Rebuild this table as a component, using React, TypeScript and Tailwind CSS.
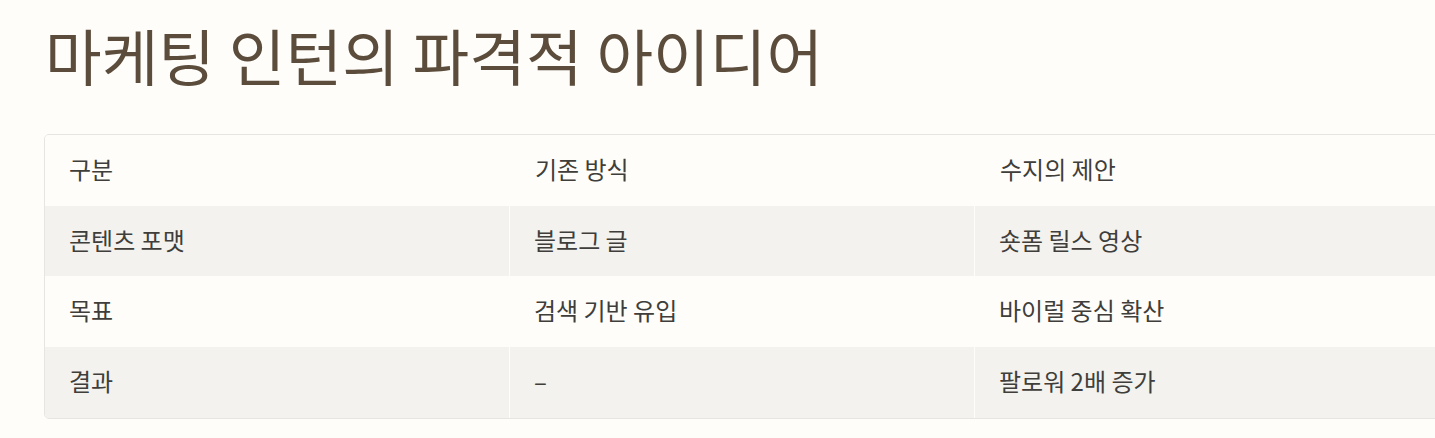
import React from "react";

const rows = [
  ["콘텐츠 포맷", "블로그 글", "숏폼 릴스 영상"],
  ["목표", "검색 기반 유입", "바이럴 중심 확산"],
  ["결과", "–", "팔로워 2배 증가"],
];
const heights = ["h-[70px]", "h-[71px]", "h-[71px]"];

export default function App() {
  return (
    <div
      className="w-[1435px] h-[438px] overflow-hidden bg-[#fefdfa]"
      style={{ fontFamily: '"Noto Sans CJK KR", "Noto Sans", sans-serif' }}
    >
      <div className="pl-[44px] pt-[16px]">
        <h1 className="text-[61.6px] leading-[78px] text-[#5b4c3b] font-normal ml-[1px]">
          마케팅 인턴의 파격적 아이디어
        </h1>
        <div className="mt-[40px] w-[1400px] border border-[#e7e5e1] rounded-[5px] overflow-hidden text-[24px] text-[#3f3e3b]">
          <div className="grid grid-cols-[465px_465px_1fr] h-[71px] bg-[#fefdfa]">
            <div className="flex items-center pl-[24px] pb-[3px]">구분</div>
            <div className="flex items-center pl-[25px] pb-[3px]">기존 방식</div>
            <div className="flex items-center pl-[25px] pb-[3px]">수지의 제안</div>
          </div>
          {rows.map((r, i) => (
            <div
              key={i}
              className={`grid grid-cols-[465px_465px_1fr] ${heights[i]} ${
                i % 2 === 0 ? "bg-[#f3f2ef]" : "bg-[#fefdfa]"
              }`}
            >
              <div className="flex items-center pl-[24px] pb-[3px] border-r border-[#fefdfa]">{r[0]}</div>
              <div className="flex items-center pl-[24px] pb-[3px] border-r border-[#fefdfa]">{r[1]}</div>
              <div className="flex items-center pl-[24px] pb-[3px]">{r[2]}</div>
            </div>
          ))}
        </div>
      </div>
    </div>
  );
}
